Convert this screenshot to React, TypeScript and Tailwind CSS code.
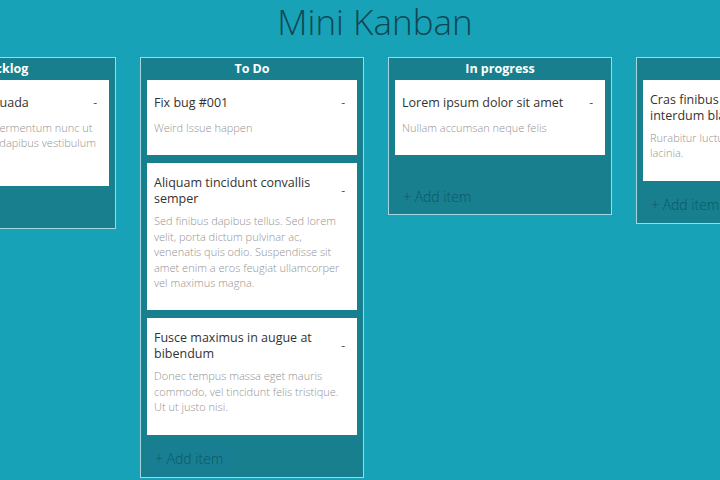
type Card = { title: string; desc: string };
type Column = { name: string; cards: Card[] };

const columns: Column[] = [
  {
    name: "Backlog",
    cards: [
      {
        title: "Curabitur malesuada",
        desc: "Vivamus a ante et fermentum nunc ut pretium. Nam felis dapibus vestibulum eros nisl.",
      },
    ],
  },
  {
    name: "To Do",
    cards: [
      { title: "Fix bug #001", desc: "Weird Issue happen" },
      {
        title: "Aliquam tincidunt convallis semper",
        desc: "Sed finibus dapibus tellus. Sed lorem velit, porta dictum pulvinar ac, venenatis quis odio. Suspendisse sit amet enim a eros feugiat ullamcorper vel maximus magna.",
      },
      {
        title: "Fusce maximus in augue at bibendum",
        desc: "Donec tempus massa eget mauris commodo, vel tincidunt felis tristique. Ut ut justo nisi.",
      },
    ],
  },
  {
    name: "In progress",
    cards: [{ title: "Lorem ipsum dolor sit amet", desc: "Nullam accumsan neque felis" }],
  },
  {
    name: "Done",
    cards: [
      {
        title: "Cras finibus eget lectus interdum blandit",
        desc: "Rurabitur luctus dui sed nunc finibus lacinia.",
      },
    ],
  },
];

function KanbanCard({ card }: { card: Card }) {
  return (
    <div className="bg-white pt-[12px] pb-[20px] pl-[7px] pr-[10px]">
      <div className="flex items-center justify-between gap-3 min-h-[22px]">
        <div className="text-[12.5px] leading-4 font-medium text-[#333]">{card.title}</div>
        <button className="text-[12px] leading-4 text-[#555] shrink-0 pr-[2px]">-</button>
      </div>
      <p className="mt-[6px] text-[11px] leading-[15.4px] font-light text-[#939393]">
        {card.desc}
      </p>
    </div>
  );
}

function KanbanColumn({ col, active }: { col: Column; active?: boolean }) {
  return (
    <div className="w-[224px] shrink-0 border border-[#a3d6de] bg-[#177f8e] px-[6px] pb-[2px] self-start">
      <div className="h-[22px] flex items-center justify-center text-[12.5px] font-bold text-white">
        {col.name}
      </div>
      <div className="flex flex-col gap-[8px] min-h-[92px]">
        {col.cards.map((c, i) => (
          <KanbanCard key={i} card={c} />
        ))}
      </div>
      <button
        className={
          "mt-[8px] h-[32px] px-[7px] text-[14px] font-light text-[#0e5764] text-left border " +
          (active ? "border-[#1a7c98] bg-[#187f93]" : "border-transparent")
        }
      >
        + Add item
      </button>
    </div>
  );
}

export default function App() {
  return (
    <div
      className="w-[720px] h-[480px] overflow-hidden bg-[#17a2b8]"
      style={{ fontFamily: '"Open Sans", "Liberation Sans", sans-serif' }}
    >
      <h1 className="pt-[1px] pb-[2px] pl-[30px] text-center text-[35px] leading-[42px] font-light text-[#0f4752]">
        Mini Kanban
      </h1>
      <div className="mt-[12px] ml-[-108px] flex gap-[24px]">
        {columns.map((c) => (
          <KanbanColumn key={c.name} col={c} active={c.name === "To Do"} />
        ))}
      </div>
    </div>
  );
}
